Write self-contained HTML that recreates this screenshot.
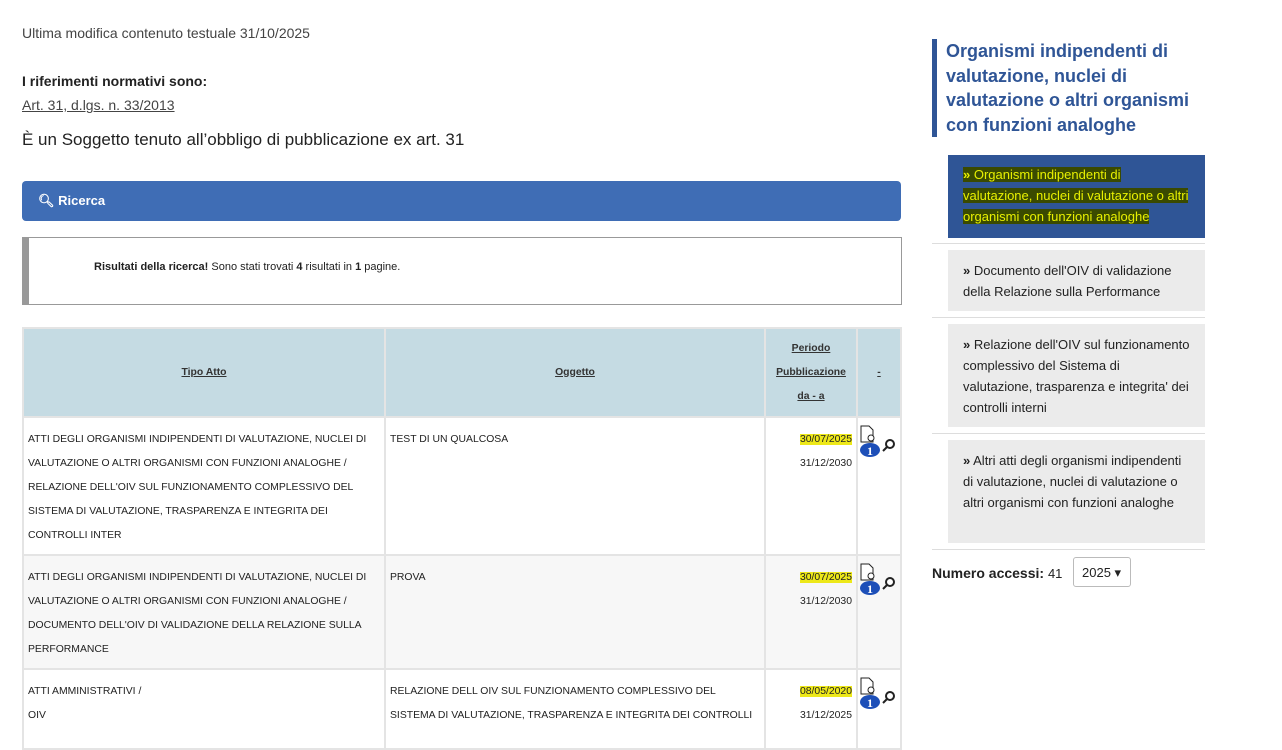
<!DOCTYPE html>
<html><head><meta charset="utf-8"><style>
body{margin:0;width:1282px;height:726px;overflow:hidden;background:#fff;font-family:"Liberation Sans",sans-serif;color:#222;position:relative}
.a{position:absolute}
.hl{background:rgba(235,230,0,.9)}
table{table-layout:fixed}
td,th{border:2px solid #e4e4e4;font-size:10.4px;vertical-align:top;padding:0;overflow:hidden}
th{background:#c5dbe3;vertical-align:middle;text-align:center;font-weight:bold;color:#333;text-decoration:underline;line-height:24px}
td{line-height:24px;color:#222;padding:10px 4px 0 4px}
.m{position:absolute;left:948px;width:257px;background:#ebebeb;font-size:13px;line-height:21px;color:#222;padding:10px 15px;box-sizing:border-box}
.ic{position:absolute;width:44px;height:40px}
</style></head><body>
<div class="a" style="left:22px;top:25px;font-size:14px;color:#444">Ultima modifica contenuto testuale 31/10/2025</div>
<div class="a" style="left:22px;top:73px;font-size:14px;font-weight:bold">I riferimenti normativi sono:</div>
<div class="a" style="left:22px;top:97px;font-size:14px;color:#444;text-decoration:underline">Art. 31, d.lgs. n. 33/2013</div>
<div class="a" style="left:22px;top:130px;font-size:17px">È un Soggetto tenuto all’obbligo di pubblicazione ex art. 31</div>
<div class="a" style="left:22px;top:181px;width:879px;height:40px;background:#3f6db5;border-radius:4px;color:#fff;font-size:13px;font-weight:bold;line-height:40px"><span style="margin-left:16px">&#x1F50D;&#xFE0E; Ricerca</span></div>
<div class="a" style="left:22px;top:237px;height:68px;border:1px solid #999;border-left:7px solid #999;box-sizing:border-box;width:880px;font-size:11px;line-height:58px"><span style="margin-left:65px"><b>Risultati della ricerca!</b> Sono stati trovati <b>4</b> risultati in <b>1</b> pagine.</span></div>
<table class="a" style="left:22px;top:327px;border-collapse:collapse;width:878px">
<colgroup><col style="width:362px"><col style="width:380px"><col style="width:92px"><col style="width:44px"></colgroup>
<tr style="height:89px"><th>Tipo Atto</th><th>Oggetto</th><th>Periodo<br>Pubblicazione<br>da - a</th><th>-</th></tr>
<tr style="height:138px"><td>ATTI DEGLI ORGANISMI INDIPENDENTI DI VALUTAZIONE, NUCLEI DI VALUTAZIONE O ALTRI ORGANISMI CON FUNZIONI ANALOGHE / RELAZIONE DELL'OIV SUL FUNZIONAMENTO COMPLESSIVO DEL SISTEMA DI VALUTAZIONE, TRASPARENZA E INTEGRITA DEI CONTROLLI INTER</td><td>TEST DI UN QUALCOSA</td><td style="text-align:right"><span class="hl">30/07/2025</span><br>31/12/2030</td><td></td></tr>
<tr style="height:114px;background:#f7f7f7"><td>ATTI DEGLI ORGANISMI INDIPENDENTI DI VALUTAZIONE, NUCLEI DI VALUTAZIONE O ALTRI ORGANISMI CON FUNZIONI ANALOGHE / DOCUMENTO DELL'OIV DI VALIDAZIONE DELLA RELAZIONE SULLA PERFORMANCE</td><td>PROVA</td><td style="text-align:right"><span class="hl">30/07/2025</span><br>31/12/2030</td><td></td></tr>
<tr style="height:80px"><td>ATTI AMMINISTRATIVI /<br>OIV</td><td>RELAZIONE DELL OIV SUL FUNZIONAMENTO COMPLESSIVO DEL SISTEMA DI VALUTAZIONE, TRASPARENZA E INTEGRITA DEI CONTROLLI</td><td style="text-align:right"><span class="hl">08/05/2020</span><br>31/12/2025</td><td></td></tr>
</table>
<svg class="ic" style="left:857px;top:424px" viewBox="0 0 44 40"><path d="M4 2h8l4 4v12H4z" fill="#fff" stroke="#222"/><circle cx="14" cy="14" r="3" fill="#fff" stroke="#222"/><ellipse cx="13" cy="26" rx="10" ry="7" fill="#1d4fb8"/><text x="13" y="31" font-size="12" font-weight="bold" fill="#fff" text-anchor="middle" font-family="Liberation Serif">1</text><circle cx="33" cy="20" r="4" fill="#fff" stroke="#222" stroke-width="2"/><path d="M30 23l-4 4" stroke="#222" stroke-width="2"/></svg>
<svg class="ic" style="left:857px;top:562px" viewBox="0 0 44 40"><path d="M4 2h8l4 4v12H4z" fill="#fff" stroke="#222"/><circle cx="14" cy="14" r="3" fill="#fff" stroke="#222"/><ellipse cx="13" cy="26" rx="10" ry="7" fill="#1d4fb8"/><text x="13" y="31" font-size="12" font-weight="bold" fill="#fff" text-anchor="middle" font-family="Liberation Serif">1</text><circle cx="33" cy="20" r="4" fill="#fff" stroke="#222" stroke-width="2"/><path d="M30 23l-4 4" stroke="#222" stroke-width="2"/></svg>
<svg class="ic" style="left:857px;top:676px" viewBox="0 0 44 40"><path d="M4 2h8l4 4v12H4z" fill="#fff" stroke="#222"/><circle cx="14" cy="14" r="3" fill="#fff" stroke="#222"/><ellipse cx="13" cy="26" rx="10" ry="7" fill="#1d4fb8"/><text x="13" y="31" font-size="12" font-weight="bold" fill="#fff" text-anchor="middle" font-family="Liberation Serif">1</text><circle cx="33" cy="20" r="4" fill="#fff" stroke="#222" stroke-width="2"/><path d="M30 23l-4 4" stroke="#222" stroke-width="2"/></svg>
<div class="a" style="left:932px;top:39px;width:260px;border-left:5px solid #2f5596;padding-left:9px;color:#2f5596;font-size:18px;font-weight:bold;line-height:24.5px">Organismi indipendenti di valutazione, nuclei di valutazione o altri organismi con funzioni analoghe</div>
<div class="m" style="top:155px;height:83px;background:#2f5596;color:#fff;padding:9px 15px"><span style="background:#3a4a00;color:#e8f000"><b>»</b> Organismi indipendenti di valutazione, nuclei di valutazione o altri organismi con funzioni analoghe</span></div>
<div class="a" style="left:932px;top:243px;width:273px;border-top:1px solid #ddd"></div>
<div class="m" style="top:250px;height:61px"><b>»</b> Documento dell'OIV di validazione della Relazione sulla Performance</div>
<div class="a" style="left:932px;top:317px;width:273px;border-top:1px solid #ddd"></div>
<div class="m" style="top:324px;height:103px"><b>»</b> Relazione dell'OIV sul funzionamento complessivo del Sistema di valutazione, trasparenza e integrita' dei controlli interni</div>
<div class="a" style="left:932px;top:433px;width:273px;border-top:1px solid #ddd"></div>
<div class="m" style="top:440px;height:103px"><b>»</b> Altri atti degli organismi indipendenti di valutazione, nuclei di valutazione o altri organismi con funzioni analoghe</div>
<div class="a" style="left:932px;top:549px;width:273px;border-top:1px solid #ddd"></div>
<div class="a" style="left:932px;top:565px;font-size:14px"><b>Numero accessi:</b> <span style="font-size:13px">41</span></div>
<div class="a" style="left:1073px;top:557px;width:58px;height:30px;border:1px solid #bbb;border-radius:3px;font-size:13px;line-height:30px;box-sizing:border-box;padding-left:8px">2025 &#9662;</div>
</body></html>
